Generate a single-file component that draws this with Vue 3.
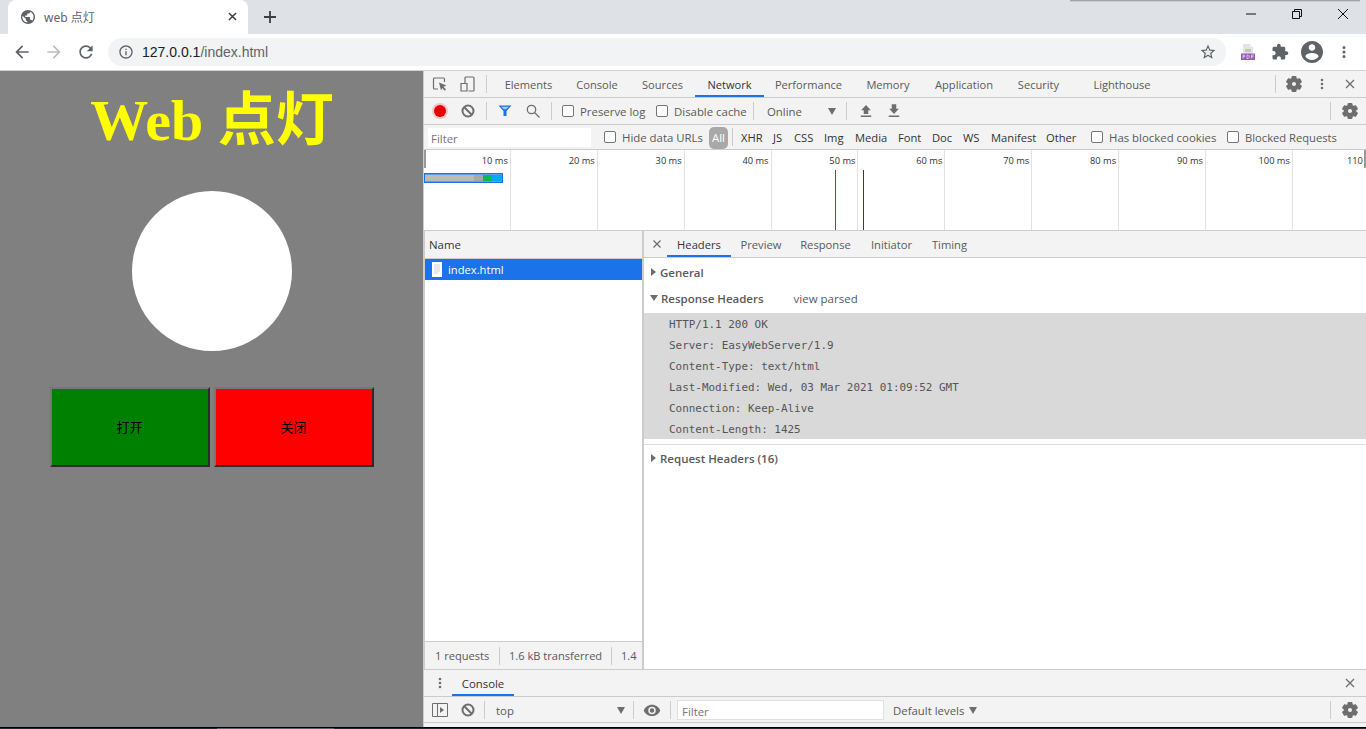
<script setup>
const P = {
  globe: 'M12 2C6.48 2 2 6.48 2 12s4.48 10 10 10 10-4.48 10-10S17.52 2 12 2zm-1 17.93c-3.95-.49-7-3.85-7-7.93 0-.62.08-1.21.21-1.79L9 15v1c0 1.1.9 2 2 2v1.93zm6.9-2.54c-.26-.81-1-1.39-1.9-1.39h-1v-3c0-.55-.45-1-1-1H8v-2h2c.55 0 1-.45 1-1V7h2c1.1 0 2-.9 2-2v-.41c2.93 1.19 5 4.06 5 7.41 0 2.08-.8 3.97-2.1 5.39z',
  back: 'M20 11H7.83l5.59-5.59L12 4l-8 8 8 8 1.41-1.41L7.83 13H20v-2z',
  forward: 'M4 11h12.17l-5.59-5.59L12 4l8 8-8 8-1.41-1.41L16.17 13H4v-2z',
  reload: 'M17.65 6.35C16.2 4.9 14.21 4 12 4c-4.42 0-7.99 3.58-7.99 8s3.57 8 7.99 8c3.73 0 6.84-2.55 7.73-6h-2.08c-.82 2.33-3.04 4-5.65 4-3.31 0-6-2.69-6-6s2.69-6 6-6c1.66 0 3.14.69 4.22 1.78L13 11h7V4l-2.35 2.35z',
  info: 'M11 7h2v2h-2zm0 4h2v6h-2zm1-9C6.48 2 2 6.48 2 12s4.48 10 10 10 10-4.48 10-10S17.52 2 12 2zm0 18c-4.41 0-8-3.59-8-8s3.59-8 8-8 8 3.59 8 8-3.59 8-8 8z',
  star: 'M22 9.24l-7.19-.62L12 2 9.19 8.63 2 9.24l5.46 4.73L5.82 21 12 17.27 18.18 21l-1.63-7.03L22 9.24zM12 15.4l-3.76 2.27 1-4.28-3.32-2.88 4.38-.38L12 6.1l1.71 4.04 4.38.38-3.32 2.88 1 4.28L12 15.4z',
  puzzle: 'M20.5 11H19V7c0-1.1-.9-2-2-2h-4V3.5C13 2.12 11.88 1 10.5 1S8 2.12 8 3.5V5H4c-1.1 0-1.99.9-1.99 2v3.8H3.5c1.49 0 2.7 1.21 2.7 2.7s-1.21 2.7-2.7 2.7H2V20c0 1.1.9 2 2 2h3.8v-1.5c0-1.49 1.21-2.7 2.7-2.7 1.49 0 2.7 1.21 2.7 2.7V22H17c1.1 0 2-.9 2-2v-4h1.5c1.38 0 2.5-1.12 2.5-2.5S21.88 11 20.5 11z',
  account: 'M12 2C6.48 2 2 6.48 2 12s4.48 10 10 10 10-4.48 10-10S17.52 2 12 2zm0 3c1.66 0 3 1.34 3 3s-1.34 3-3 3-3-1.34-3-3 1.34-3 3-3zm0 14.2c-2.5 0-4.71-1.28-6-3.22.03-1.99 4-3.08 6-3.08 1.99 0 5.97 1.09 6 3.08-1.29 1.94-3.5 3.22-6 3.22z',
  gear: 'M19.43 12.98c.04-.32.07-.64.07-.98s-.03-.66-.07-.98l2.11-1.65c.19-.15.24-.42.12-.64l-2-3.46c-.12-.22-.39-.3-.61-.22l-2.49 1c-.52-.4-1.08-.73-1.69-.98l-.38-2.65C14.46 2.18 14.25 2 14 2h-4c-.25 0-.46.18-.49.42l-.38 2.65c-.61.25-1.17.59-1.69.98l-2.49-1c-.23-.09-.49 0-.61.22l-2 3.46c-.13.22-.07.49.12.64l2.11 1.65c-.04.32-.07.65-.07.98s.03.66.07.98l-2.11 1.65c-.19.15-.24.42-.12.64l2 3.46c.12.22.39.3.61.22l2.49-1c.52.4 1.08.73 1.69.98l.38 2.65c.03.24.24.42.49.42h4c.25 0 .46-.18.49-.42l.38-2.65c.61-.25 1.17-.59 1.69-.98l2.49 1c.23.09.49 0 .61-.22l2-3.46c.12-.22.07-.49-.12-.64l-2.11-1.65zM12 15.5c-1.93 0-3.5-1.57-3.5-3.5s1.57-3.5 3.5-3.5 3.5 1.57 3.5 3.5-1.57 3.5-3.5 3.5z',
  dots: 'M12 8a2 2 0 1 0 0-4 2 2 0 0 0 0 4zm0 2a2 2 0 1 0 0 4 2 2 0 0 0 0-4zm0 6a2 2 0 1 0 0 4 2 2 0 0 0 0-4z',
  up: 'M12 4l6.500 7H15v5H9v-5H5.500zM5 18h14v2H5z',
  down: 'M9 3h6v6h3.500L12 16 5.500 9H9zM5 18h14v2H5z',
  eye: 'M12 5C7 5 2.730 8.110 1 12.500 2.730 16.890 7 20 12 20s9.270-3.110 11-7.500C21.270 8.110 17 5 12 5zm0 12.500a5 5 0 1 1 0-10 5 5 0 0 1 0 10zm0-8a3 3 0 1 0 0 6 3 3 0 0 0 0-6z'
}
const mainTabs = [
  { t: 'Elements', w: 71 }, { t: 'Console', w: 66 }, { t: 'Sources', w: 65 },
  { t: 'Network', w: 69, on: true }, { t: 'Performance', w: 89 }, { t: 'Memory', w: 70 },
  { t: 'Application', w: 82 }, { t: 'Security', w: 67 }, { t: 'Lighthouse', w: 100 }
]
const types = [
  { t: 'XHR', w: 32 }, { t: 'JS', w: 21 }, { t: 'CSS', w: 30 }, { t: 'Img', w: 31 },
  { t: 'Media', w: 43 }, { t: 'Font', w: 34 }, { t: 'Doc', w: 31 }, { t: 'WS', w: 28 },
  { t: 'Manifest', w: 55 }, { t: 'Other', w: 45 }
]
const ticks = ['10 ms', '20 ms', '30 ms', '40 ms', '50 ms', '60 ms', '70 ms', '80 ms', '90 ms', '100 ms']
const detailTabs = [
  { t: 'Headers', w: 64, on: true }, { t: 'Preview', w: 60 }, { t: 'Response', w: 69 },
  { t: 'Initiator', w: 63 }, { t: 'Timing', w: 53 }
]
const headerLines = [
  'HTTP/1.1 200 OK', 'Server: EasyWebServer/1.9', 'Content-Type: text/html',
  'Last-Modified: Wed, 03 Mar 2021 01:09:52 GMT', 'Connection: Keep-Alive', 'Content-Length: 1425'
]
</script>

<template>
  <div class="screen">
    <header class="tabstrip">
      <div class="winshadow"></div>
      <div class="tab">
        <svg class="fav" viewBox="2 2 20 20"><path :d="P.globe" /></svg>
        <span class="tabtitle">web 点灯</span>
        <svg class="tabclose" viewBox="0 0 10 10"><path d="M1 1l8 8M9 1l-8 8" /></svg>
      </div>
      <svg class="newtab" viewBox="0 0 12 12"><path d="M6 0v12M0 6h12" /></svg>
      <div class="winctrls">
        <svg class="wc" viewBox="0 0 10 10"><path d="M0 5h10" /></svg>
        <svg class="wc wc-r" viewBox="0 0 10 10"><path d="M.5 2.500h7v7h-7zM2.500 2.500v-2h7v7h-2" /></svg>
        <svg class="wc wc-x" viewBox="0 0 10 10"><path d="M0 0l10 10M10 0L0 10" /></svg>
      </div>
    </header>

    <nav class="toolbar">
      <svg class="nav" viewBox="0 0 24 24"><path :d="P.back" /></svg>
      <svg class="nav nav-f" viewBox="0 0 24 24"><path :d="P.forward" /></svg>
      <svg class="nav nav-r" viewBox="0 0 24 24"><path :d="P.reload" /></svg>
      <div class="omni">
        <svg class="info" viewBox="0 0 24 24"><path :d="P.info" /></svg>
        <span class="url"><b>127.0.0.1</b>/index.html</span>
        <svg class="star" viewBox="0 0 24 24"><path :d="P.star" /></svg>
      </div>
      <svg class="pdf" viewBox="0 0 14 16">
        <path d="M2 0h7l3 3v7H2z" fill="#e4e4e4" />
        <path d="M9 0l3 3H9z" fill="#f6f6f6" />
        <path d="M4 5h6v3H4z" fill="#c4c4c4" />
        <path d="M0 9.500h14V16H0z" fill="#9b59b6" />
        <path d="M2 14.500v-3.500h1.500v1.800H2M6 11h1.300l.8 .8v1.900l-.8 .8H6zM10.500 14.500V11H13M10.500 12.700H12.500" stroke="#e6d6ee" fill="none" stroke-width=".8" />
      </svg>
      <svg class="ext" viewBox="0 0 24 24"><path :d="P.puzzle" /></svg>
      <svg class="acct" viewBox="2 2 20 20"><path :d="P.account" /></svg>
      <svg class="menu" viewBox="0 0 24 24"><path :d="P.dots" /></svg>
    </nav>

    <main class="viewport">
      <section class="page">
        <h1 class="title">Web 点灯</h1>
        <div class="lamp"></div>
        <div class="btns">
          <button class="btn on">打开</button>
          <button class="btn off">关闭</button>
        </div>
      </section>

      <section class="devtools">
        <div class="dt-tabs">
          <svg class="ic inspect" viewBox="0 0 16 16">
            <path d="M6 13H2.500a1 1 0 0 1-1-1V3a1 1 0 0 1 1-1h9a1 1 0 0 1 1 1v3" fill="none" stroke="#6e6e6e" stroke-width="1.200" />
            <path d="M7 6.500l7.500 3-3 1.200 2.500 2.800-1.200 1.200-2.600-2.800-1.200 2.600z" fill="#6e6e6e" />
          </svg>
          <svg class="ic device" viewBox="0 0 16 16">
            <path d="M5.500 14.500V2a1 1 0 0 1 1-1h7a1 1 0 0 1 1 1v12.500a.5 .5 0 0 1-.5 .5H9" fill="none" stroke="#6e6e6e" stroke-width="1.200" />
            <path d="M1.500 7.500h6v7.500h-6z" fill="#f3f3f3" stroke="#6e6e6e" stroke-width="1.200" />
          </svg>
          <i class="sep sep-a"></i>
          <div v-for="x in mainTabs" :key="x.t" class="mt" :class="{ active: x.on }" :style="{ width: x.w + 'px' }">{{ x.t }}</div>
          <div class="grow"></div>
          <i class="sep"></i>
          <svg class="gear gear-a" viewBox="0 0 24 24"><path :d="P.gear" /></svg>
          <svg class="kebab" viewBox="0 0 24 24"><path :d="P.dots" /></svg>
          <svg class="x x-a" viewBox="0 0 10 10"><path d="M1 1l8 8M9 1l-8 8" /></svg>
        </div>

        <div class="dt-bar">
          <span class="rec"></span>
          <svg class="ban" viewBox="0 0 14 14"><circle cx="7" cy="7" r="5.500" /><path d="M3 3l8 8" /></svg>
          <i class="sep sep-b"></i>
          <svg class="funnel" viewBox="0 0 14 12"><path d="M.5 .5h13L8.500 6v5h-3V6z" /><path d="M3 1.800h8L8 4.200H6z" fill="#a9caf6" /></svg>
          <svg class="search" viewBox="0 0 14 14"><circle cx="5.500" cy="5.500" r="4.200" /><path d="M8.500 8.500l5 5" /></svg>
          <i class="sep sep-c"></i>
          <label class="chk chk-p"><span class="box"></span>Preserve log</label>
          <label class="chk chk-d"><span class="box"></span>Disable cache</label>
          <i class="sep sep-d"></i>
          <span class="online">Online</span>
          <span class="tri"></span>
          <i class="sep sep-e"></i>
          <svg class="arrow" viewBox="0 0 24 24"><path :d="P.up" /></svg>
          <svg class="arrow arrow-d" viewBox="0 0 24 24"><path :d="P.down" /></svg>
          <div class="grow"></div>
          <i class="sep"></i>
          <svg class="gear gear-b" viewBox="0 0 24 24"><path :d="P.gear" /></svg>
        </div>

        <div class="dt-filter">
          <div class="finput">Filter</div>
          <label class="chk chk-h"><span class="box"></span>Hide data URLs</label>
          <span class="all">All</span>
          <i class="sep sep-f"></i>
          <span v-for="x in types" :key="x.t" class="ty" :style="{ width: x.w + 'px' }">{{ x.t }}</span>
          <label class="chk chk-c"><span class="box"></span>Has blocked cookies</label>
          <label class="chk chk-q"><span class="box"></span>Blocked Requests</label>
        </div>

        <div class="timeline">
          <div v-for="x in ticks" :key="x" class="tick">{{ x }}</div>
          <div class="tick last">110</div>
          <span class="grip grip-l"></span>
          <span class="grip grip-r"></span>
          <div class="bar">
            <span class="b1"></span><span class="b2"></span><span class="b3"></span><span class="b4"></span>
          </div>
          <span class="mark mark-b"></span>
          <span class="mark mark-r"></span>
        </div>

        <div class="split">
          <aside class="names">
            <div class="nhead">Name</div>
            <div class="nrow">
              <svg class="doc" viewBox="0 0 10 15">
                <path d="M0 0h10v15H0z" fill="#fff" />
                <path d="M2 3h6M2 5h6M2 7h6M2 9h6M2 11h4" stroke="#d0d0d0" />
              </svg>
              index.html
            </div>
            <div class="nfill"></div>
            <div class="nfoot">
              <span class="f1">1 requests</span>
              <span class="f2">1.6 kB transferred</span>
              <span class="f3">1.4</span>
            </div>
          </aside>
          <article class="detail">
            <div class="dtabs">
              <svg class="x x-d" viewBox="0 0 10 10"><path d="M1.500 1.500l7 7M8.500 1.500l-7 7" /></svg>
              <div v-for="x in detailTabs" :key="x.t" class="dt" :class="{ active: x.on }" :style="{ width: x.w + 'px' }">{{ x.t }}</div>
            </div>
            <div class="sect sect-g"><span class="tr-r"></span>General</div>
            <div class="sect sect-r"><span class="tr-d"></span>Response Headers<span class="parsed">view parsed</span></div>
            <div class="hblock">
              <div v-for="l in headerLines" :key="l" class="hl">{{ l }}</div>
            </div>
            <div class="hr"></div>
            <div class="sect sect-q"><span class="tr-r"></span>Request Headers (16)</div>
          </article>
        </div>

        <div class="drawer">
          <svg class="kebab kebab-d" viewBox="0 0 24 24"><path :d="P.dots" /></svg>
          <div class="ctab">Console</div>
          <div class="grow"></div>
          <svg class="x x-c" viewBox="0 0 10 10"><path d="M1 1l8 8M9 1l-8 8" /></svg>
        </div>
        <div class="cbar">
          <svg class="sidebar" viewBox="0 0 16 14"><path d="M.5 .5h15v13H.5zM5.500 .5v13" fill="none" stroke="#6e6e6e" /><path d="M8 4l4 3-4 3z" fill="#6e6e6e" /></svg>
          <svg class="ban ban-c" viewBox="0 0 14 14"><circle cx="7" cy="7" r="5.500" /><path d="M3 3l8 8" /></svg>
          <i class="sep sep-g"></i>
          <span class="top">top</span>
          <span class="tri tri-c"></span>
          <i class="sep sep-h"></i>
          <svg class="eye" viewBox="0 0 24 24"><path :d="P.eye" /></svg>
          <i class="sep sep-i"></i>
          <div class="cfilter">Filter</div>
          <span class="levels">Default levels</span>
          <span class="tri tri-l"></span>
          <div class="grow"></div>
          <i class="sep"></i>
          <svg class="gear gear-c" viewBox="0 0 24 24"><path :d="P.gear" /></svg>
        </div>
        <div class="cfill"></div>
      </section>
    </main>
    <div class="taskline"></div>
  </div>
</template>

<style>
html, body { margin: 0; padding: 0; overflow: hidden; background: #fff; }
</style>

<style scoped>
.screen { width: 1366px; height: 729px; display: flex; flex-direction: column; overflow: hidden; font-family: "Open Sans", "Noto Sans CJK SC", sans-serif; position: relative; }
svg { display: block; flex: none; }
.grow { flex: 1; }

.tabstrip { height: 34px; background: #dee1e6; display: flex; align-items: flex-end; padding-left: 8px; position: relative; flex: none; }
.winshadow { position: absolute; left: 1070px; top: 0; width: 290px; height: 2px; background: linear-gradient(#8f9196, #dee1e6); }
.tab { width: 240px; height: 34px; background: #fff; border-radius: 8px 8px 0 0; display: flex; align-items: center; box-sizing: border-box; padding-left: 13px; }
.fav { width: 14px; height: 14px; fill: #5f6368; margin-top: -1px; }
.tabtitle { font-size: 12px; color: #5f6368; margin-left: 9px; width: 184px; font-family: "Noto Sans", "Noto Sans CJK SC", sans-serif; margin-top: -1px; }
.tabclose { width: 9px; height: 9px; stroke: #3c4043; stroke-width: 1.6; fill: none; margin-top: -1px; }
.newtab { width: 12px; height: 12px; stroke: #3c4043; stroke-width: 1.8; margin: 0 0 11px 16px; }
.winctrls { margin-left: auto; display: flex; align-items: center; height: 28px; align-self: flex-start; }
.wc { width: 10px; height: 10px; stroke: #111; stroke-width: 1; fill: none; margin-right: 36px; }
.wc-x { margin-right: 18px; }

.toolbar { height: 37px; background: #fff; display: flex; align-items: center; flex: none; box-sizing: border-box; padding-left: 12px; border-bottom: 1px solid #d0d2d5; }
.nav { width: 20px; height: 20px; fill: #5f6368; }
.nav-f { fill: #bcbdbf; margin-left: 12px; }
.nav-r { margin-left: 12px; }
.omni { width: 1118px; height: 28px; margin-left: 12px; background: #f1f3f4; border-radius: 14px; display: flex; align-items: center; box-sizing: border-box; padding-left: 10px; padding-right: 10px; }
.info { width: 16px; height: 16px; fill: #5f6368; }
.url { font-size: 14px; margin-left: 8px; color: #5f6368; font-family: "Liberation Sans", sans-serif; }
.url b { font-weight: 400; color: #202124; }
.star { width: 18px; height: 18px; fill: #5f6368; margin-left: auto; margin-right: -1px; }
.pdf { width: 14px; height: 16px; margin-left: 15px; }
.ext { width: 18px; height: 18px; fill: #5f6368; margin-left: 16px; }
.acct { width: 22px; height: 22px; fill: #5f6368; margin-left: 12px; }
.menu { width: 18px; height: 20px; fill: #5f6368; margin-left: 12px; }

.viewport { flex: 1; display: flex; min-height: 0; }
.page { width: 423px; flex: none; box-sizing: border-box; padding-left: 1px; background: #808080; display: flex; flex-direction: column; align-items: center; }
.title { margin: 0; height: 100px; line-height: 100px; font-size: 58px; font-weight: 700; color: #ff0; text-align: center; width: 100%; font-family: "Liberation Serif", "Noto Sans CJK SC", serif; }
.lamp { width: 160px; height: 160px; border-radius: 50%; background: #fff; margin-top: 20px; }
.btns { display: flex; gap: 4px; margin-top: 36px; }
.btn { width: 160px; height: 80px; box-sizing: border-box; border: 2px solid; border-color: #767676 #2b2b2b #2b2b2b #767676; padding: 0 1px 2px 0; color: #000; font-size: 13px; font-family: "Noto Sans CJK SC", sans-serif; }
.btn.on { background: #008000; }
.btn.off { background: #f00; }

.devtools { flex: 1; min-width: 0; display: flex; flex-direction: column; background: #f3f3f3; border-left: 1px solid #ccc; box-sizing: border-box; font-size: 11.400px; color: #5a5a5a; }
.sep { display: block; width: 1px; height: 18px; background: #ccc; flex: none; }
.dt-tabs { height: 27px; display: flex; align-items: center; border-bottom: 1px solid #ccc; flex: none; box-sizing: border-box; padding-left: 8px; }
.ic { width: 16px; height: 16px; }
.device { margin-left: 11px; width: 17px; }
.sep-a { margin-left: 10px; margin-right: 6px; }
.mt { height: 26px; line-height: 27px; text-align: center; flex: none; box-sizing: border-box; white-space: nowrap; font-size: 11.100px; }
.mt.active { border-bottom: 2px solid #1a73e8; color: #333; }
.gear { width: 18px; height: 18px; fill: #6e6e6e; stroke: #6e6e6e; stroke-width: 1.500; }
.gear-a { margin-left: 9px; }
.kebab { width: 16px; height: 18px; fill: #6e6e6e; margin-left: 11px; }
.x { width: 10px; height: 10px; stroke: #6e6e6e; stroke-width: 1.300; fill: none; }
.x-a { margin-left: 15px; margin-right: 11px; }

.dt-bar { height: 27px; display: flex; align-items: center; border-bottom: 1px solid #ccc; flex: none; box-sizing: border-box; padding-left: 9px; }
.rec { width: 12px; height: 12px; border-radius: 50%; background: #e60000; box-shadow: 0 0 0 2px #f5c6c6; margin-left: 1px; }
.ban { width: 14px; height: 14px; fill: none; stroke: #6e6e6e; stroke-width: 2; margin-left: 15px; }
.sep-b { margin-left: 11px; }
.funnel { width: 14px; height: 12px; fill: #1a73e8; margin-left: 11px; }
.search { width: 14px; height: 14px; fill: none; stroke: #6e6e6e; stroke-width: 1.300; margin-left: 14px; }
.sep-c { margin-left: 11px; }
.chk { display: flex; align-items: center; white-space: nowrap; flex: none; }
.box { width: 10px; height: 10px; border: 1px solid #767676; border-radius: 2px; background: #fff; margin-right: 6px; flex: none; }
.chk-p { margin-left: 10px; width: 94px; }
.chk-d { width: 93px; }
.sep-d { margin-left: 4px; }
.online { margin-left: 13px; width: 61px; }
.tri { width: 0; height: 0; border-left: 4px solid transparent; border-right: 4px solid transparent; border-top: 7px solid #6e6e6e; flex: none; }
.sep-e { margin-left: 10px; }
.arrow { width: 18px; height: 18px; fill: #6e6e6e; margin-left: 10px; }
.arrow-d { margin-left: 10px; }
.gear-b { margin: 0 7px 0 10px; }

.dt-filter { height: 25px; display: flex; align-items: center; border-bottom: 1px solid #ccc; flex: none; box-sizing: border-box; padding-left: 4px; }
.finput { width: 163px; height: 19px; line-height: 21px; background: #fff; color: #757575; padding-left: 3px; box-sizing: border-box; margin-top: 1px; }
.chk-h { margin-left: 13px; width: 105px; }
.all { width: 19px; height: 22px; line-height: 22px; background: #a8a8a8; color: #fff; border-radius: 5px; text-align: center; flex: none; margin-top: 1px; }
.sep-f { margin-left: 4px; margin-right: 8px; }
.ty { flex: none; white-space: nowrap; color: #333; font-size: 11.200px; }
.chk-c { width: 136px; }
.chk-q { font-size: 11.200px; }

.timeline { height: 81px; background: #fff; display: flex; flex: none; position: relative; border-bottom: 1px solid #ccc; box-sizing: border-box; overflow: hidden; }
.tick { width: 86.900px; flex: none; box-sizing: border-box; border-right: 1px solid #e2e2e2; text-align: right; padding: 4px 2px 0 0; font-size: 9.300px; color: #333; line-height: 13px; }
.tick.last { border-right: 0; flex: 1; width: auto; text-align: left; padding-left: 54px; padding-right: 0; }
.grip { position: absolute; top: 0; width: 2px; height: 18px; background: #999; }
.grip-l { left: 0; }
.grip-r { right: 0; }
.bar { position: absolute; left: 0; top: 23px; width: 79px; height: 10px; box-sizing: border-box; border: 1px solid #1a73e8; display: flex; padding: 1px 0 1px 0; background: #5b9df0; }
.bar span { display: block; height: 100%; }
.b1 { width: 49px; background: #bbb; }
.b2 { width: 9px; background: #a8a8a8; }
.b3 { width: 9px; background: #0cb956; }
.b4 { width: 10px; background: #03a9f4; }
.mark { position: absolute; top: 20px; bottom: 0; width: 1px; }
.mark-b { left: 411px; background: #1a5fb4; }
.mark-r { left: 439px; background: #8b1a1a; }

.split { flex: 1; min-height: 0; display: flex; background: #fff; }
.names { width: 220px; flex: none; border-left: 1px solid #ccc; border-right: 2px solid #ccc; box-sizing: border-box; display: flex; flex-direction: column; }
.nhead { height: 28px; line-height: 28px; background: #f3f3f3; border-bottom: 1px solid #ccc; padding-left: 4px; box-sizing: border-box; color: #333; flex: none; }
.nrow { height: 21px; background: #1a73e8; color: #fff; display: flex; align-items: center; padding-left: 7px; flex: none; font-size: 11.200px; }
.doc { width: 10px; height: 15px; margin-right: 6px; }
.nfill { flex: 1; background: #fff; }
.nfoot { height: 28px; background: #f3f3f3; border-top: 1px solid #ccc; box-sizing: border-box; display: flex; align-items: center; flex: none; font-size: 11.100px; }
.nfoot span { display: block; height: 18px; line-height: 18px; box-sizing: border-box; white-space: nowrap; }
.f1 { width: 75px; padding-left: 10px; border-right: 1px solid #ccc; }
.f2 { width: 112px; padding-left: 9px; border-right: 1px solid #ccc; }
.f3 { padding-left: 9px; }

.detail { flex: 1; min-width: 0; background: #fff; }
.dtabs { height: 27px; background: #f3f3f3; border-bottom: 1px solid #ccc; display: flex; align-items: center; box-sizing: border-box; padding-left: 23px; }
.x-d { margin-left: -15px; margin-right: 5px; width: 10px; height: 10px; }
.dt { height: 26px; line-height: 27px; text-align: center; flex: none; box-sizing: border-box; font-size: 11.200px; }
.dt.active { border-bottom: 2px solid #1a73e8; color: #333; }
.sect { display: flex; align-items: center; font-weight: 600; color: #5a5a5a; height: 26px; padding-left: 7px; font-size: 11.500px; white-space: nowrap; }
.sect-g { margin-top: 1px; }
.tr-r { width: 0; height: 0; border-top: 4px solid transparent; border-bottom: 4px solid transparent; border-left: 5px solid #6e6e6e; margin-right: 4px; }
.tr-d { width: 0; height: 0; border-left: 4px solid transparent; border-right: 4px solid transparent; border-top: 6px solid #6e6e6e; margin-left: -1px; margin-right: 3px; }
.parsed { font-weight: 400; margin-left: 30px; }
.hblock { background: #d9d9d9; height: 126px; box-sizing: border-box; padding: 1px 0 0 25px; margin-top: 2px; }
.hl { height: 21px; line-height: 21px; font-family: "DejaVu Sans Mono", monospace; font-size: 10.950px; color: #555; white-space: nowrap; }
.hr { height: 1px; background: #ddd; margin-top: 5px; }

.drawer { height: 28px; display: flex; align-items: center; border-top: 1px solid #ccc; border-bottom: 1px solid #ccc; box-sizing: border-box; flex: none; }
.kebab-d { margin-left: 8px; }
.ctab { height: 26px; line-height: 27px; margin-left: 4px; width: 62px; text-align: center; border-bottom: 2px solid #1a73e8; box-sizing: border-box; color: #333; }
.x-c { margin-right: 11px; }
.cbar { height: 26px; display: flex; align-items: center; flex: none; border-bottom: 1px solid #ccc; box-sizing: border-box; padding: 1px 0 0 8px; }
.sidebar { width: 16px; height: 14px; }
.ban-c { margin-left: 13px; }
.sep-g { margin-left: 9px; }
.top { margin-left: 11px; width: 121px; }
.sep-h { margin-left: 8px; }
.eye { width: 18px; height: 18px; fill: #6e6e6e; margin-left: 9px; }
.sep-i { margin-left: 9px; }
.cfilter { width: 207px; height: 20px; line-height: 21px; border: 1px solid #e0e0e0; background: #fff; color: #757575; padding-left: 4px; box-sizing: border-box; margin-left: 6px; }
.levels { margin-left: 9px; white-space: nowrap; width: 74px; }
.tri-l { margin-left: 2px; }
.gear-c { margin: 0 7px 0 10px; }
.cfill { height: 4px; background: #f3f3f3; flex: none; }
.taskline { height: 2px; box-sizing: border-box; border-top: 1px solid #000; flex: none; background: linear-gradient(to right, #1d2b30 217px, #55646a 217px, #55646a 334px, #1d2b30 334px); }
</style>
